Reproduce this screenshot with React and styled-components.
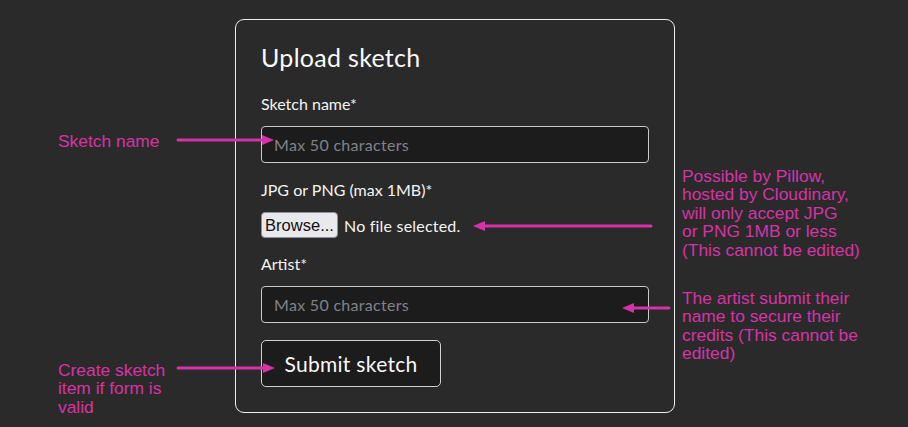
import React from "react";
import styled, { createGlobalStyle } from "styled-components";

const MAGENTA = "#d633a8";

const GlobalStyle = createGlobalStyle`
  html, body { margin: 0; padding: 0; background: #2a2a2a; }
  * { box-sizing: border-box; }
`;

const Page = styled.div`
  position: relative;
  width: 908px;
  height: 427px;
  overflow: hidden;
  display: flex;
  justify-content: center;
  align-items: flex-start;
  padding: 19px 0 0 2px;
  font-family: Lato, "Open Sans", sans-serif;
  color: #f2f2f2;
`;

const Card = styled.form`
  width: 440px;
  height: 394px;
  border: 1px solid #ededed;
  border-radius: 9px;
  padding: 23px 25px 0 25px;
  display: flex;
  flex-direction: column;
  align-items: flex-start;
`;

const Title = styled.h2`
  margin: 0 0 20px 0;
  font-size: 25px;
  line-height: 29px;
  font-weight: 400;
  letter-spacing: 0.3px;
  color: #fafafa;
`;

const Label = styled.label`
  display: block;
  font-size: 16px;
  line-height: 24px;
  margin-bottom: 10px;
  color: #f4f4f4;
`;

const Field = styled.div`
  width: 100%;
  display: flex;
  flex-direction: column;
  align-items: flex-start;
  margin-bottom: ${(p) => p.$gap}px;
`;

const TextInput = styled.input`
  width: 388px;
  height: 37px;
  background: #1c1c1c;
  border: 1px solid #c9c9c9;
  border-radius: 4px;
  padding: 0 12px;
  font-family: inherit;
  font-size: 16px;
  letter-spacing: 0.3px;
  color: #eee;
  outline: none;
  &::placeholder { color: #80828a; }
`;

const FileRow = styled.div`
  display: flex;
  align-items: center;
  gap: 6px;
  height: 26px;
`;

const BrowseButton = styled.button`
  height: 26px;
  width: 77px;
  padding: 0;
  background: #e9e9ed;
  border: 1px solid #8f8f9d;
  border-radius: 4px;
  font-family: "Liberation Sans", Arial, sans-serif;
  font-size: 16.5px;
  color: #111;
`;

const FileStatus = styled.span`
  font-size: 16px;
  letter-spacing: 0.2px;
  color: #f4f4f4;
`;

const SubmitButton = styled.button`
  width: 180px;
  height: 47px;
  background: #1c1c1c;
  border: 1px solid #d0d0d0;
  border-radius: 5px;
  font-family: inherit;
  font-size: 21px;
  letter-spacing: 0.3px;
  color: #f8f8f8;
  padding: 0;
`;

const Note = styled.div`
  position: absolute;
  left: ${(p) => p.$x}px;
  top: ${(p) => p.$y}px;
  width: ${(p) => p.$w}px;
  font-family: "Liberation Sans", Arial, sans-serif;
  font-size: 17.4px;
  line-height: 18.4px;
  color: ${MAGENTA};
`;

const ArrowSvg = styled.svg`
  position: absolute;
  left: 0;
  top: 0;
  pointer-events: none;
`;

function Arrow({ x1, x2, y }) {
  const dir = x2 > x1 ? 1 : -1;
  const base = x2 - dir * 12;
  return (
    <g>
      <line x1={x1} y1={y} x2={base} y2={y} stroke={MAGENTA} strokeWidth="3" strokeLinecap="round" />
      <polygon points={`${x2},${y} ${base},${y - 5} ${base},${y + 5}`} fill={MAGENTA} />
    </g>
  );
}

export default function App() {
  return (
    <>
      <GlobalStyle />
      <Page>
        <Card onSubmit={(e) => e.preventDefault()}>
          <Title>Upload sketch</Title>
          <Field $gap={15}>
            <Label>Sketch name*</Label>
            <TextInput placeholder="Max 50 characters" />
          </Field>
          <Field $gap={14}>
            <Label>JPG or PNG (max 1MB)*</Label>
            <FileRow>
              <BrowseButton type="button">Browse...</BrowseButton>
              <FileStatus>No file selected.</FileStatus>
            </FileRow>
          </Field>
          <Field $gap={17}>
            <Label>Artist*</Label>
            <TextInput placeholder="Max 50 characters" />
          </Field>
          <SubmitButton type="submit">Submit sketch</SubmitButton>
        </Card>

        <Note $x={58} $y={132} $w={130}>Sketch name</Note>
        <Note $x={682} $y={167} $w={220}>
          Possible by Pillow,<br />hosted by Cloudinary,<br />will only accept JPG<br />or PNG 1MB or less<br />(This cannot be edited)
        </Note>
        <Note $x={682} $y={289} $w={220}>
          The artist submit their<br />name to secure their<br />credits (This cannot be<br />edited)
        </Note>
        <Note $x={58} $y={361} $w={130}>
          Create sketch<br />item if form is<br />valid
        </Note>

        <ArrowSvg width="908" height="427" viewBox="0 0 908 427">
          <Arrow x1={178} x2={274} y={140} />
          <Arrow x1={651} x2={473} y={226} />
          <Arrow x1={669} x2={622} y={308} />
          <Arrow x1={178} x2={275} y={368} />
        </ArrowSvg>
      </Page>
    </>
  );
}
